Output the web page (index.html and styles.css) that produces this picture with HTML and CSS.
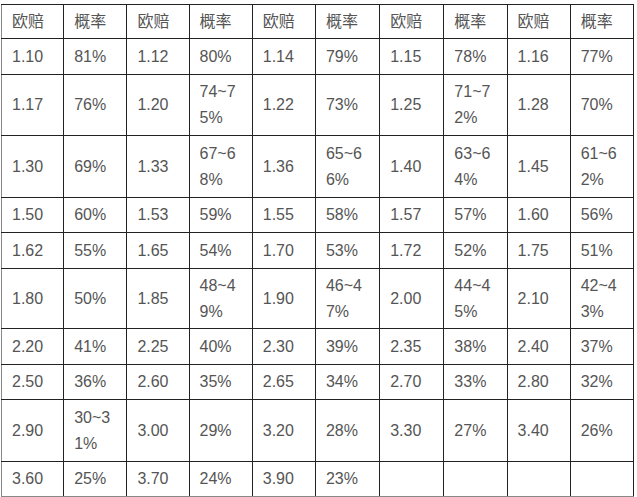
FILE: index.html
```html
<!DOCTYPE html>
<html lang="zh">
<head>
<meta charset="utf-8">
<title>欧赔概率表</title>
<link rel="stylesheet" href="styles.css">
</head>
<body>
<table class="odds">
<colgroup>
<col class="c1"><col class="c2"><col class="c3"><col class="c4"><col class="c5"><col class="c6"><col class="c7"><col class="c8"><col class="c9"><col class="c10">
</colgroup>
<tbody>
<tr class="h34"><td>欧赔</td><td>概率</td><td>欧赔</td><td>概率</td><td>欧赔</td><td>概率</td><td>欧赔</td><td>概率</td><td>欧赔</td><td>概率</td></tr>
<tr class="h36"><td>1.10</td><td>81%</td><td>1.12</td><td>80%</td><td>1.14</td><td>79%</td><td>1.15</td><td>78%</td><td>1.16</td><td>77%</td></tr>
<tr class="h61"><td>1.17</td><td>76%</td><td>1.20</td><td>74~75%</td><td>1.22</td><td>73%</td><td>1.25</td><td>71~72%</td><td>1.28</td><td>70%</td></tr>
<tr class="h62"><td>1.30</td><td>69%</td><td>1.33</td><td>67~68%</td><td>1.36</td><td>65~66%</td><td>1.40</td><td>63~64%</td><td>1.45</td><td>61~62%</td></tr>
<tr class="h35"><td>1.50</td><td>60%</td><td>1.53</td><td>59%</td><td>1.55</td><td>58%</td><td>1.57</td><td>57%</td><td>1.60</td><td>56%</td></tr>
<tr class="h36"><td>1.62</td><td>55%</td><td>1.65</td><td>54%</td><td>1.70</td><td>53%</td><td>1.72</td><td>52%</td><td>1.75</td><td>51%</td></tr>
<tr class="h60"><td>1.80</td><td>50%</td><td>1.85</td><td>48~49%</td><td>1.90</td><td>46~47%</td><td>2.00</td><td>44~45%</td><td>2.10</td><td>42~43%</td></tr>
<tr class="h36"><td>2.20</td><td>41%</td><td>2.25</td><td>40%</td><td>2.30</td><td>39%</td><td>2.35</td><td>38%</td><td>2.40</td><td>37%</td></tr>
<tr class="h35"><td>2.50</td><td>36%</td><td>2.60</td><td>35%</td><td>2.65</td><td>34%</td><td>2.70</td><td>33%</td><td>2.80</td><td>32%</td></tr>
<tr class="h62"><td>2.90</td><td>30~31%</td><td>3.00</td><td>29%</td><td>3.20</td><td>28%</td><td>3.30</td><td>27%</td><td>3.40</td><td>26%</td></tr>
<tr class="h35 last"><td>3.60</td><td>25%</td><td>3.70</td><td>24%</td><td>3.90</td><td>23%</td><td></td><td></td><td></td><td></td></tr>
</tbody>
</table>
</body>
</html>
```

FILE: styles.css
```css
html, body {
  margin: 0;
  padding: 0;
  background: #fff;
}

body {
  padding: 4px 0 0 1px;
  font-family: "Liberation Sans", Arial, "Noto Sans CJK SC", sans-serif;
  font-size: 16px;
  color: #555;
}

.odds {
  border-collapse: collapse;
  table-layout: fixed;
  width: 633px;
}

.c1, .c3 { width: 62px; }
.c6, .c7 { width: 64px; }
.c2, .c4, .c5, .c8, .c9, .c10 { width: 63px; }

.odds td {
  border: 1px solid #222;
  padding: 0 10px;
  line-height: 26px;
  vertical-align: middle;
  word-break: break-all;
  text-align: left;
}

.h34 { height: 34px; }
.h35 { height: 35px; }
.h36 { height: 36px; }
.h60 { height: 60px; }
.h61 { height: 61px; }
.h62 { height: 62px; }

.odds td:first-child {
  border-left-color: #888;
}

.odds .last td {
  border-bottom: 2px solid #888;
}
```
